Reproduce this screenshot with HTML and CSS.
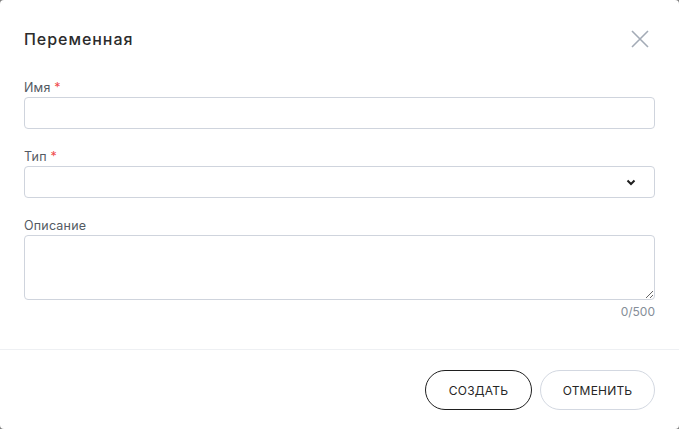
FILE: index.html
```html
<!DOCTYPE html>
<html lang="ru">
<head>
<meta charset="utf-8">
<title>Переменная</title>
<link rel="stylesheet" href="styles.css">
</head>
<body>
<div class="modal">
  <div class="modal-header">
    <h2 class="modal-title">Переменная</h2>
    <button class="close-btn" aria-label="Закрыть">
      <svg width="18" height="18" viewBox="0 0 18 18"><path d="M1 1L17 17M17 1L1 17" stroke="#a3abb6" stroke-width="1.6" fill="none"/></svg>
    </button>
  </div>
  <div class="modal-body">
    <div class="field">
      <label class="label">Имя <span class="req">*</span></label>
      <input class="control" type="text">
    </div>
    <div class="field">
      <label class="label">Тип <span class="req">*</span></label>
      <div class="control select">
        <svg class="chevron" width="10" height="7" viewBox="0 0 10 7"><path d="M1.5 1.5L5 5L8.5 1.5" stroke="#1f1f1f" stroke-width="2" fill="none"/></svg>
      </div>
    </div>
    <div class="field">
      <label class="label">Описание</label>
      <textarea class="control area"></textarea>
      <div class="counter">0/500</div>
    </div>
  </div>
  <div class="modal-footer">
    <button class="btn btn-primary">Создать</button>
    <button class="btn btn-secondary">Отменить</button>
  </div>
</div>
</body>
</html>
```
FILE: styles.css
```css
html, body {
  margin: 0;
  padding: 0;
  height: 100%;
}
body {
  background: #7f7f7f;
  font-family: Inter, "Noto Sans", sans-serif;
}
.modal {
  box-sizing: border-box;
  height: 100vh;
  background: #fff;
  border-radius: 4px;
  display: flex;
  flex-direction: column;
}
.modal-header {
  display: flex;
  align-items: center;
  justify-content: space-between;
  padding: 24px 30px 0 24px;
  height: 30px;
}
.modal-title {
  margin: 0;
  font-size: 16px;
  font-weight: 500;
  color: #2b2b2b;
  line-height: 30px;
  letter-spacing: 0.95px;
}
.close-btn {
  background: none;
  border: 0;
  padding: 0;
  width: 18px;
  height: 18px;
  display: flex;
}
.modal-body {
  padding: 26px 24px 30px;
  display: flex;
  flex-direction: column;
  gap: 20px;
}
.field {
  display: flex;
  flex-direction: column;
}
.label {
  font-size: 12.5px;
  line-height: 15px;
  color: #545a63;
  letter-spacing: 0.2px;
  margin-bottom: 2px;
}
.req {
  color: #ef4b4b;
}
.control {
  box-sizing: border-box;
  height: 32px;
  border: 1px solid #cfd4dd;
  border-radius: 4px;
  background: #fff;
  margin: 0;
  font: inherit;
  outline: none;
}
.select {
  display: flex;
  align-items: center;
  justify-content: flex-end;
  padding-right: 18px;
}
.area {
  height: 65px;
  resize: vertical;
}
.counter {
  margin-top: 4px;
  text-align: right;
  font-size: 12px;
  line-height: 15px;
  color: #858d98;
}
.modal-footer {
  border-top: 1px solid #eef0f3;
  padding: 20px 24px;
  display: flex;
  justify-content: flex-end;
  gap: 8px;
}
.btn {
  height: 40px;
  border-radius: 20px;
  background: #fff;
  font-family: inherit;
  font-size: 12px;
  font-weight: 400;
  letter-spacing: 0.2px;
  text-transform: uppercase;
  color: #262626;
  padding: 0 16px;
}
.btn-primary {
  border: 1px solid #1f1f1f;
  width: 107px;
}
.btn-secondary {
  border: 1px solid #d3d8e1;
  width: 115px;
}
```
